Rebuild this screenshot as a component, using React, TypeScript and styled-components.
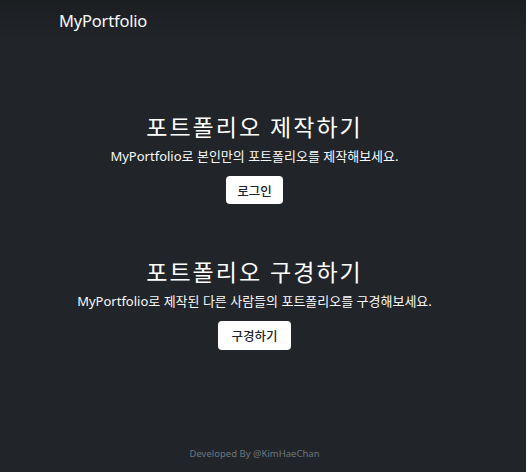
import React from "react";
import styled, { createGlobalStyle } from "styled-components";

const GlobalStyle = createGlobalStyle`
  html, body {
    margin: 0;
    padding: 0;
    background: #ffffff;
  }

  body {
    font-family: "Noto Sans", "Noto Sans CJK KR", sans-serif;
  }
`;

const Page = styled.div`
  width: 526px;
  height: 472px;
  background: #212529;
  color: #ffffff;
  overflow: hidden;
`;

const Column = styled.div`
  width: 509px;
  height: 100%;
  display: flex;
  flex-direction: column;
`;

const Header = styled.header`
  height: 40px;
  width: 526px;
  padding-left: 59px;
  box-sizing: border-box;
  display: flex;
  align-items: center;
  background: linear-gradient(180deg, #1b1e21 0%, #212529 100%);
`;

const Brand = styled.span`
  font-size: 16.5px;
  color: #f8f9fa;
  letter-spacing: -0.2px;
`;

const Main = styled.main`
  flex: 1;
  display: flex;
  flex-direction: column;
  align-items: center;
  gap: 54px;
  padding-top: 73px;
`;

const Section = styled.section`
  display: flex;
  flex-direction: column;
  align-items: center;
`;

const Title = styled.h2`
  margin: 0 0 6px;
  font-size: 23px;
  font-weight: 400;
  line-height: 28px;
  letter-spacing: 2px;
  color: #ffffff;
`;

const Lead = styled.p`
  margin: 0 0 10px;
  font-size: 13px;
  line-height: 19px;
  color: #f8f9fa;
`;

const Button = styled.button<{ $wide?: boolean }>`
  height: ${(p) => (p.$wide ? 29 : 28)}px;
  padding: 0 ${(p) => (p.$wide ? 13 : 11)}px;
  border: none;
  border-radius: 4px;
  background: #ffffff;
  color: #212529;
  font-family: "Noto Sans CJK KR", sans-serif;
  font-size: 12.5px;
  font-weight: 500;
  cursor: pointer;
`;

const Footer = styled.footer`
  height: 25px;
  display: flex;
  justify-content: center;
  align-items: flex-start;
  font-size: 9.5px;
  color: #6c757d;
`;

const sections = [
  {
    title: "포트폴리오 제작하기",
    lead: "MyPortfolio로 본인만의 포트폴리오를 제작해보세요.",
    button: "로그인",
    wide: false,
  },
  {
    title: "포트폴리오 구경하기",
    lead: "MyPortfolio로 제작된 다른 사람들의 포트폴리오를 구경해보세요.",
    button: "구경하기",
    wide: true,
  },
];

const App = () => {
  return (
    <>
      <GlobalStyle />
      <Page>
        <Column>
          <Header>
            <Brand>MyPortfolio</Brand>
          </Header>
          <Main>
            {sections.map((s) => (
              <Section key={s.title}>
                <Title>{s.title}</Title>
                <Lead>{s.lead}</Lead>
                <Button $wide={s.wide}>{s.button}</Button>
              </Section>
            ))}
          </Main>
          <Footer>Developed By @KimHaeChan</Footer>
        </Column>
      </Page>
    </>
  );
};

export default App;
